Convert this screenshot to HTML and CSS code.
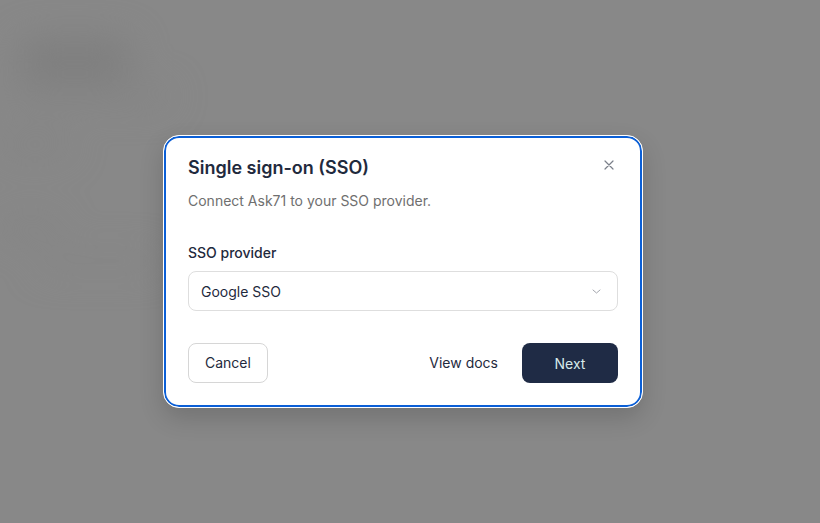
FILE: index.html
```html
<!DOCTYPE html>
<html lang="en">
<head>
<meta charset="utf-8">
<title>Single sign-on (SSO)</title>
<link rel="stylesheet" href="styles.css">
</head>
<body>
<div class="page" aria-hidden="true">
  <div class="bg-blob"></div>
  <div class="bg-line l1"></div>
  <div class="bg-line l2"></div>
  <div class="bg-line l3"></div>
  <div class="bg-line l4"></div>
</div>
<div class="overlay">
  <div class="modal" role="dialog" aria-labelledby="sso-title">
    <div class="modal-header">
      <h2 class="modal-title" id="sso-title">Single sign-on (SSO)</h2>
      <button class="close-btn" aria-label="Close">
        <svg width="10" height="10" viewBox="0 0 10 10"><path d="M1 1L9 9M9 1L1 9" stroke="#7a7f89" stroke-width="1.2" stroke-linecap="round"/></svg>
      </button>
    </div>
    <p class="modal-desc">Connect Ask71 to your SSO provider.</p>
    <label class="field-label">SSO provider</label>
    <div class="select">
      <span>Google SSO</span>
      <svg class="chev" width="9" height="5" viewBox="0 0 9 5"><path d="M1 1l3.5 3L8 1" fill="none" stroke="#a3a6ad" stroke-width="1" stroke-linecap="round" stroke-linejoin="round"/></svg>
    </div>
    <div class="modal-footer">
      <button class="btn btn-outline">Cancel</button>
      <div class="footer-right">
        <button class="btn btn-ghost">View docs</button>
        <button class="btn btn-primary">Next</button>
      </div>
    </div>
  </div>
</div>
</body>
</html>
```
FILE: styles.css
```css
* { box-sizing: border-box; }
html, body { margin: 0; height: 100%; }
body {
  background: #888888;
  font-family: Inter, "Noto Sans", sans-serif;
  overflow: hidden;
  position: relative;
}
.page {
  position: absolute;
  inset: 0;
  filter: blur(18px);
}
.bg-blob {
  position: absolute;
  left: 20px; top: 40px;
  width: 110px; height: 40px;
  background: #7e7e7e;
  border-radius: 14px;
}
.bg-line {
  position: absolute;
  height: 12px;
  background: #838383;
  border-radius: 6px;
}
.l1 { left: 10px; top: 90px; width: 160px; }
.l2 { left: 0; top: 140px; width: 70px; }
.l3 { left: 0; top: 222px; width: 60px; }
.l4 { left: 40px; top: 255px; width: 120px; background: #858585; }

.overlay {
  position: absolute;
  inset: 0;
  display: flex;
  align-items: center;
  justify-content: center;
  padding: 20px 14px 0 0;
}
.modal {
  width: 480px;
  background: #fff;
  border: 1px solid #fff;
  border-radius: 16px;
  box-shadow: inset 0 0 0 2px #0b5fd6, 0 10px 24px rgba(0,0,0,0.16);
  padding: 20px 24px 24px;
  color: #1f2a3d;
}
.modal-header {
  display: flex;
  justify-content: space-between;
  align-items: flex-start;
}
.modal-title {
  margin: 0;
  font-size: 18px;
  line-height: 24px;
  font-weight: 600;
  color: #1f2a3d;
}
.close-btn {
  width: 24px;
  height: 24px;
  margin: -3px -3px 0 0;
  border: 0;
  background: none;
  padding: 0;
  display: flex;
  align-items: center;
  justify-content: center;
  cursor: pointer;
}
.modal-desc {
  margin: 11px 0 0;
  font-size: 14px;
  line-height: 20px;
  color: #6f6f6f;
}
.field-label {
  display: block;
  margin-top: 32px;
  font-size: 14px;
  line-height: 20px;
  font-weight: 450;
  color: #1f2a3d;
}
.select {
  margin-top: 8px;
  height: 40px;
  border: 1px solid #dedede;
  border-radius: 8px;
  display: flex;
  align-items: center;
  justify-content: space-between;
  padding: 0 16px 0 12px;
  font-size: 14px;
  color: #1f2a3d;
}
.modal-footer {
  margin-top: 32px;
  display: flex;
  justify-content: space-between;
  align-items: center;
}
.footer-right {
  display: flex;
  gap: 12px;
  align-items: center;
}
.btn {
  height: 40px;
  font-family: inherit;
  font-size: 14px;
  font-weight: 400;
  border-radius: 8px;
  cursor: pointer;
  padding-bottom: 1px;
}
.btn-outline {
  background: #fff;
  border: 1px solid #d6d6d6;
  padding: 0 16px 1px;
  color: #1f2a3d;
}
.btn-ghost {
  background: none;
  border: 0;
  padding: 0 12px 1px;
  color: #1f2a3d;
}
.btn-primary {
  background: #1f2b45;
  border: 0;
  width: 96px;
  color: #d7eaea;
}
```
